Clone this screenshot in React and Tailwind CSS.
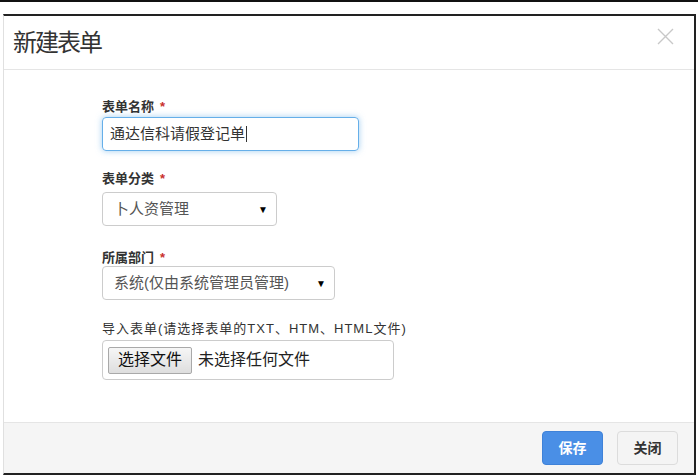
const font = { fontFamily: '"Liberation Sans", "Noto Sans CJK SC", sans-serif' }

const Label = ({ children, required, className = '' }) => (
  <div className={`text-[13px] leading-[14px] font-bold text-[#333] ${className}`}>
    {children}
    {required && <span className="ml-[6px] text-[#c9302c]">*</span>}
  </div>
)

const FakeSelect = ({ value, className }) => (
  <div
    className={`${className} h-[34px] rounded-[4px] border border-[#ccc] bg-white pl-[11px] pr-[8px] flex items-center justify-between text-[15px] text-[#555]`}
  >
    <span>{value}</span>
    <span className="text-[10px] text-black">▼</span>
  </div>
)

export default function App() {
  return (
    <div className="w-[698px] h-[475px] bg-white overflow-hidden" style={font}>
      <div className="h-[2px] bg-[#111]" />
      <div className="h-[12px]" />
      <div className="ml-[3px] mr-[2px] h-[461px] flex flex-col border-t-2 border-r-2 border-b-2 border-[#222] border-l border-l-[#e0e0e0]">
        <div className="h-[54px] shrink-0 border-b border-[#e5e5e5] pl-[9px] pr-[20px] flex items-center justify-between">
          <h1 className="text-[24px] tracking-[-2px] text-[#333]">新建表单</h1>
          <svg width="17" height="17" viewBox="0 0 17 17" className="mt-[-12px]">
            <path d="M1 1 L16 16 M16 1 L1 16" stroke="#c8c8c8" strokeWidth="1.4" />
          </svg>
        </div>

        <div className="flex-1 pl-[98px] pt-[30px]">
          <Label required>表单名称</Label>
          <div className="mt-[3px] w-[257px] h-[34px] rounded-[4px] border border-[#66afe9] shadow-[0_0_6px_rgba(102,175,233,0.6)] pl-[7px] flex items-center text-[15px] text-[#333]">
            通达信科请假登记单<span className="ml-[1px] w-px h-[16px] bg-[#333]" />
          </div>

          <Label required className="mt-[21px]">表单分类</Label>
          <FakeSelect value="卜人资管理" className="mt-[6px] w-[175px]" />

          <Label required className="mt-[25px]">所属部门</Label>
          <FakeSelect value="系统(仅由系统管理员管理)" className="mt-[1px] w-[233px]" />

          <div className="mt-[22px] text-[13px] leading-[14px] tracking-[1px] text-[#333]">
            导入表单(请选择表单的TXT、HTM、HTML文件)
          </div>
          <div className="mt-[4px] w-[292px] h-[40px] rounded-[4px] border border-[#ccc] pl-[5px] flex items-center gap-[6px]">
            <div className="h-[27px] px-[9px] flex items-center rounded-[2px] border border-[#a9a9a9] bg-gradient-to-b from-[#f6f6f6] to-[#dedede] text-[16px] text-[#111]">
              选择文件
            </div>
            <span className="text-[16px] text-[#222]">未选择任何文件</span>
          </div>
        </div>

        <div className="h-[51px] shrink-0 border-t border-[#e5e5e5] bg-[#f5f5f5] flex items-center justify-end gap-[14px] pr-[16px]">
          <div className="w-[61px] h-[34px] rounded-[4px] bg-[#4a8fe6] border border-[#3f82d8] flex items-center justify-center text-[14px] font-bold text-white">
            保存
          </div>
          <div className="w-[61px] h-[34px] rounded-[4px] bg-[#f4f4f4] border border-[#dcdcdc] flex items-center justify-center text-[14px] font-bold text-[#333]">
            关闭
          </div>
        </div>
      </div>
    </div>
  )
}
